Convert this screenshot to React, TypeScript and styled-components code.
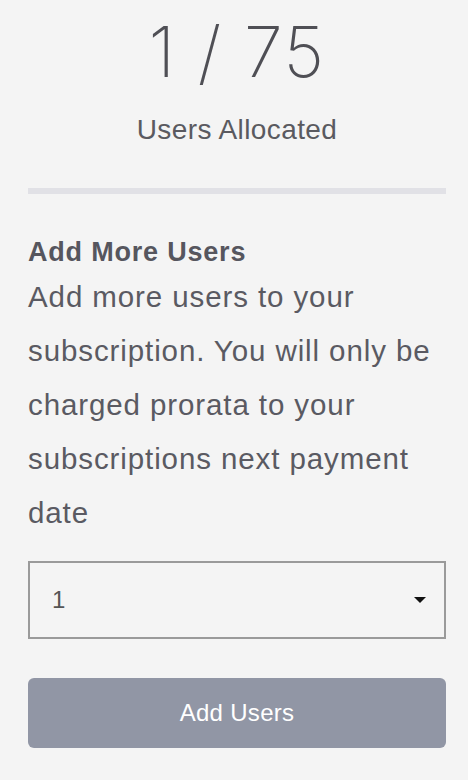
import React from "react";
import styled, { createGlobalStyle } from "styled-components";

const Global = createGlobalStyle`
  html, body { margin: 0; padding: 0; background: #f4f4f4; }
  body { font-family: "Liberation Sans", Arial, sans-serif; }
`;

const Page = styled.div`
  width: 468px;
  height: 780px;
  box-sizing: border-box;
  padding: 10px 22px 0 28px;
  background: #f4f4f4;
  display: flex;
  flex-direction: column;
`;

const Stats = styled.div`
  display: flex;
  flex-direction: column;
  align-items: center;
`;

const BigCount = styled.div`
  font-family: Inter, "Liberation Sans", sans-serif;
  font-weight: 200;
  font-size: 70px;
  line-height: 84px;
  color: #4f4f55;
  letter-spacing: 1.5px;
`;

const StatLabel = styled.div`
  font-size: 28px;
  line-height: 30px;
  color: #5a5a60;
  margin-top: 21px;
  letter-spacing: 0.4px;
`;

const Divider = styled.div`
  height: 6px;
  background: #e1e1e6;
  margin-top: 43px;
`;

const Heading = styled.h2`
  margin: 40px 0 0;
  font-size: 27px;
  line-height: 36px;
  font-weight: 700;
  letter-spacing: 0.8px;
  color: #56565e;
`;

const Body = styled.p`
  margin: 0;
  font-size: 29.5px;
  line-height: 54px;
  letter-spacing: 0.9px;
  color: #5a5a62;
`;

const SelectBox = styled.div`
  margin-top: 21px;
  height: 78px;
  box-sizing: border-box;
  border: 2px solid #9a9a9a;
  display: flex;
  align-items: center;
  justify-content: space-between;
  padding: 0 18px 0 22px;
  font-size: 24px;
  color: #555;
`;

const Caret = styled.span`
  width: 0;
  height: 0;
  border-left: 6px solid transparent;
  border-right: 6px solid transparent;
  border-top: 6px solid #111;
`;

const Button = styled.button`
  margin-top: 39px;
  height: 70px;
  border: none;
  border-radius: 6px;
  background: #9196a5;
  color: #ffffff;
  font-family: "Liberation Sans", Arial, sans-serif;
  font-size: 24px;
  letter-spacing: 0.3px;
`;

export default function App() {
  return (
    <>
      <Global />
      <Page>
        <Stats>
          <BigCount>1 / 75</BigCount>
          <StatLabel>Users Allocated</StatLabel>
        </Stats>
        <Divider />
        <Heading>Add More Users</Heading>
        <Body>
          Add more users to your subscription. You will only be charged prorata to your
          subscriptions next payment date
        </Body>
        <SelectBox>
          <span>1</span>
          <Caret />
        </SelectBox>
        <Button>Add Users</Button>
      </Page>
    </>
  );
}
